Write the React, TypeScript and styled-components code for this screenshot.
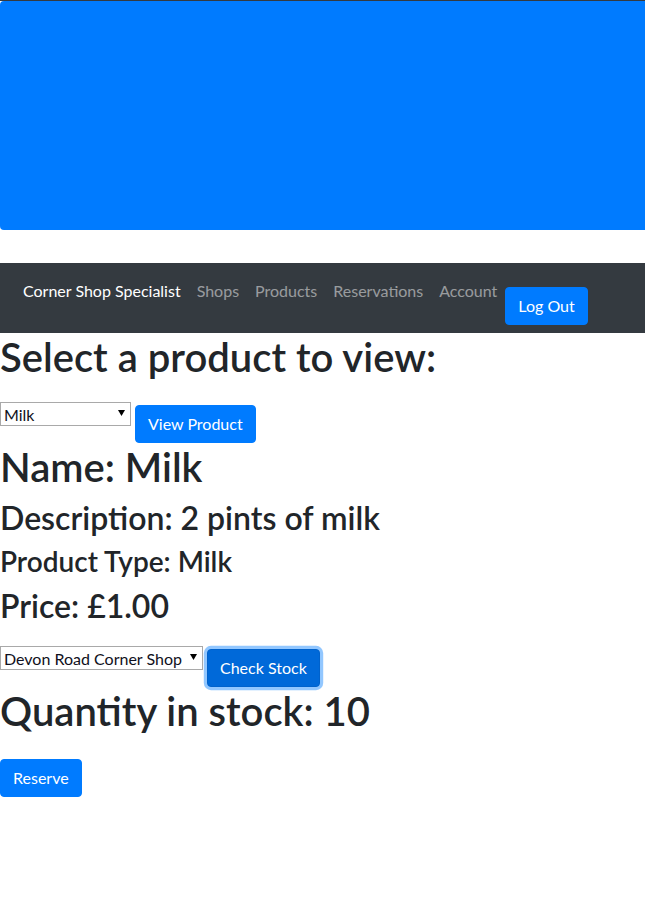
import React, {useState} from 'react';
import styled, {createGlobalStyle, css} from 'styled-components';

const GlobalStyle = createGlobalStyle`
    html, body {
        margin: 0;
        padding: 0;
        background: #fff;
    }
    body {
        font-family: Lato, "Noto Sans", "Liberation Sans", sans-serif;
        font-size: 16px;
        line-height: 1.5;
        color: #212529;
        overflow-x: hidden;
    }
    * {
        box-sizing: border-box;
    }
`;

const Page = styled.div`
    display: flex;
    flex-direction: column;
    align-items: flex-start;
`;

const TopRule = styled.div`
    align-self: stretch;
    height: 1px;
    background: #343a40;
`;

const Banner = styled.div`
    align-self: stretch;
    height: 229px;
    background: #007bff;
    border-radius: 4px 0 0 4px;
    margin-bottom: 33px;
`;

const Navbar = styled.nav`
    align-self: stretch;
    display: flex;
    align-items: flex-start;
    gap: 16px;
    height: 70px;
    padding: 8px 16px 8px 23px;
    background: #343a40;
`;

const NavText = styled.a<{brand?: boolean}>`
    padding: 8px 0;
    line-height: 24px;
    font-size: 16px;
    text-decoration: none;
    white-space: nowrap;
    color: ${props => props.brand ? '#fff' : 'rgba(255, 255, 255, 0.5)'};
    cursor: pointer;
`;

const Button = styled.button<{focused?: boolean; offset?: number}>`
    font-family: inherit;
    font-size: 16px;
    line-height: 24px;
    padding: 6px 12px;
    border: 1px solid #007bff;
    border-radius: 4px;
    background: #007bff;
    color: #fff;
    white-space: nowrap;
    cursor: pointer;
    margin-top: ${props => props.offset ?? 0}px;
    ${props => props.focused && css`
        background: #0069d9;
        border-color: #0062cc;
        box-shadow: 0 0 0 3.2px rgba(38, 143, 255, 0.5);
    `}
`;

const Heading = styled.h1<{size: number}>`
    margin: 0 0 8px;
    font-size: ${props => props.size}px;
    font-weight: 600;
    line-height: 1.2;
    color: #212529;
    white-space: nowrap;
`;

const FormRow = styled.div`
    display: flex;
    align-items: flex-start;
    gap: 4px;
    padding-top: 16px;
`;

const SelectWrap = styled.div`
    position: relative;
    margin-top: -3px;
`;

const Select = styled.select<{width: number}>`
    appearance: none;
    width: ${props => props.width}px;
    height: 24px;
    padding: 0 18px 0 3px;
    border: 1px solid #a9a9a9;
    border-radius: 0;
    background: #fff;
    font-family: inherit;
    font-size: 16px;
    color: #0f1020;
`;

const Caret = styled.svg`
    position: absolute;
    right: 6px;
    top: 8px;
    pointer-events: none;
`;

const Dropdown = ({width, options}: {width: number; options: string[]}) => {
    const [value, setValue] = useState(options[0]);
    return (
        <SelectWrap>
            <Select width={width} value={value} onChange={e => setValue(e.target.value)}>
                {options.map(o => <option key={o}>{o}</option>)}
            </Select>
            <Caret width='7' height='6' viewBox='0 0 7 6'>
                <path d='M0 0h7L3.5 6z' fill='#000' />
            </Caret>
        </SelectWrap>
    );
};

const App = () => (
    <>
        <GlobalStyle />
        <Page>
            <TopRule />
            <Banner />
            <Navbar>
                <NavText brand>Corner Shop Specialist</NavText>
                <NavText>Shops</NavText>
                <NavText>Products</NavText>
                <NavText>Reservations</NavText>
                <NavText>Account</NavText>
                <Button offset={16} style={{marginLeft: -8}}>Log Out</Button>
            </Navbar>

            <Heading size={40}>Select a product to view:</Heading>
            <FormRow>
                <Dropdown width={131} options={['Milk', 'Bread', 'Eggs']} />
                <Button>View Product</Button>
            </FormRow>

            <Heading size={40}>Name: Milk</Heading>
            <Heading as='h2' size={32}>Description: 2 pints of milk</Heading>
            <Heading as='h3' size={28}>Product Type: Milk</Heading>
            <Heading as='h2' size={32}>Price: £1.00</Heading>

            <FormRow>
                <Dropdown width={203} options={['Devon Road Corner Shop']} />
                <Button focused>Check Stock</Button>
            </FormRow>

            <Heading size={40}>Quantity in stock: 10</Heading>
            <FormRow>
                <Button>Reserve</Button>
            </FormRow>
        </Page>
    </>
);

export default App;
